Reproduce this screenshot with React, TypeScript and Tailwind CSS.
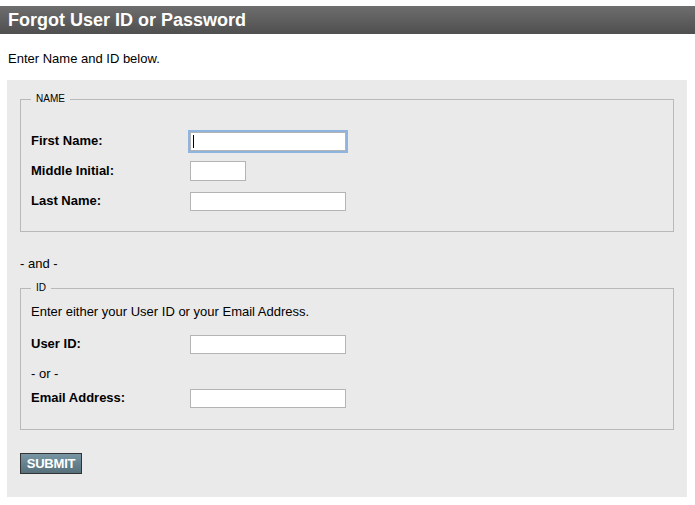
import React from "react";

function Row({ label, inputClass, focused }: { label: string; inputClass: string; focused?: boolean }) {
  return (
    <div className="flex items-center h-[20px]">
      <div className="w-[159px] font-bold text-[13px] leading-[16px] text-black">{label}</div>
      <div
        className={
          "h-[19px] bg-white border border-[#b4b4b4] " +
          inputClass +
          (focused ? " outline outline-[2px] outline-[#8fb4e0] flex items-center pl-[2px]" : "")
        }
      >
        {focused ? <div className="w-[1px] h-[13px] bg-black" /> : null}
      </div>
    </div>
  );
}

export default function App() {
  return (
    <div
      className="w-[695px] h-[505px] bg-white overflow-hidden text-black"
      style={{ fontFamily: '"Liberation Sans", Arial, sans-serif' }}
    >
      <div className="h-[6px]" />
      <div className="h-[28px] bg-gradient-to-b from-[#6e6e6e] to-[#4f4f4f] flex items-center pl-[8px]">
        <h1 className="text-white font-bold text-[18px] leading-[20px]">Forgot User ID or Password</h1>
      </div>
      <p className="text-[13px] leading-[16px] mt-[17px] ml-[8px]">Enter Name and ID below.</p>
      <div className="mt-[13px] ml-[7px] mr-[8px] h-[417px] bg-[#eaeaea] pl-[13px] pr-[13px] pt-[13px]">
        <fieldset className="border border-[#b9b9b9] pl-[10px] pr-[10px] pb-[20px]">
          <legend className="text-[10px] leading-[12px] px-[5px] ml-0">NAME</legend>
          <div className="flex flex-col gap-[10px] pt-[26px]">
            <Row label="First Name:" inputClass="w-[156px]" focused />
            <Row label="Middle Initial:" inputClass="w-[56px] h-[20px]" />
            <Row label="Last Name:" inputClass="w-[156px]" />
          </div>
        </fieldset>
        <p className="text-[13px] leading-[16px] mt-[24px]">- and -</p>
        <fieldset className="mt-[10px] border border-[#b9b9b9] pl-[10px] pr-[10px] pb-[21px]">
          <legend className="text-[10px] leading-[12px] px-[5px] ml-0">ID</legend>
          <p className="text-[13px] leading-[16px] mt-[10px]">Enter either your User ID or your Email Address.</p>
          <div className="mt-[14px]">
            <Row label="User ID:" inputClass="w-[156px]" />
          </div>
          <p className="text-[13px] leading-[16px] mt-[12px]">- or -</p>
          <div className="mt-[6px]">
            <Row label="Email Address:" inputClass="w-[156px]" />
          </div>
        </fieldset>
        <button className="mt-[23px] h-[21px] w-[62px] border border-[#333] bg-gradient-to-b from-[#7896a4] to-[#566f7b] text-white font-bold text-[13px] leading-[16px] tracking-[-0.2px]">
          SUBMIT
        </button>
      </div>
    </div>
  );
}
